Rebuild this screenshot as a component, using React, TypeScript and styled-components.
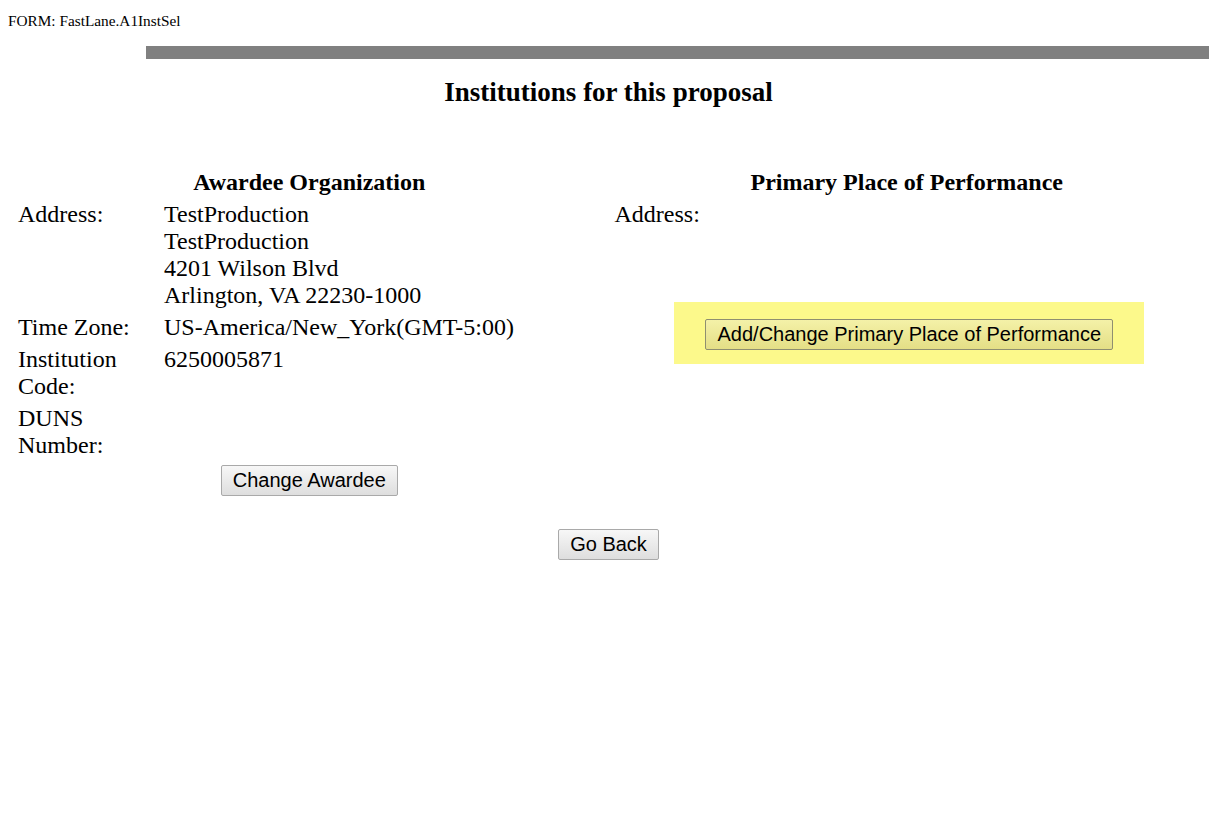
import React from "react";
import styled, { createGlobalStyle } from "styled-components";

const Global = createGlobalStyle`
  html, body { margin: 0; padding: 0; background: #fff; }
  body { margin: 8px; font-family: "Liberation Serif", "Times New Roman", serif; color: #000; }
`;

const FormName = styled.div`
  font-size: 15.3px;
  line-height: 17px;
  padding-top: 4px;
`;

const Bar = styled.div`
  margin: 17px -8px 0 138px;
  height: 13px;
  background: #808080;
`;

const Title = styled.h1`
  margin: 18px 0 0;
  text-align: center;
  font-size: 27px;
  line-height: 31px;
  font-weight: bold;
`;

const Columns = styled.div`
  display: grid;
  grid-template-columns: 1fr 1fr;
  margin: 61px 2px 0;
`;

const Column = styled.div<{ $shift?: number }>`
  display: flex;
  flex-direction: column;
  padding: 0 8px 0 ${(p) => 8 + (p.$shift ?? 0)}px;
`;

const Heading = styled.div`
  text-align: center;
  font-size: 24px;
  font-weight: bold;
  line-height: 27px;
  margin-bottom: 5px;
`;

const Fields = styled.div`
  display: grid;
  grid-template-columns: 140px 1fr;
  column-gap: 6px;
  row-gap: 5px;
  font-size: 24px;
  line-height: 27px;
`;

const Label = styled.div``;
const Value = styled.div`
  white-space: nowrap;
`;

const Button = styled.button<{ $tint?: boolean }>`
  font-family: "Liberation Sans", Arial, sans-serif;
  font-size: 20px;
  height: 31px;
  padding: 0 11px;
  border: 1px solid ${(p) => (p.$tint ? "#8f8f70" : "#a9a9a9")};
  border-radius: 2px;
  color: #000;
  background: ${(p) =>
    p.$tint
      ? "linear-gradient(#f4f1a8, #e4df86)"
      : "linear-gradient(#f7f7f7, #dedede)"};
  cursor: pointer;
`;

const ButtonRow = styled.div<{ $top: number }>`
  display: flex;
  justify-content: center;
  margin-top: ${(p) => p.$top}px;
`;

const Highlight = styled.div`
  align-self: center;
  margin: 74px 0 0 5px;
  width: 470px;
  height: 62px;
  box-sizing: border-box;
  background: #fcf98b;
  display: flex;
  justify-content: center;
  padding-top: 17px;
`;

export default function App() {
  return (
    <>
      <Global />
      <FormName>FORM: FastLane.A1InstSel</FormName>
      <Bar />
      <Title>Institutions for this proposal</Title>
      <Columns>
        <Column>
          <Heading>Awardee Organization</Heading>
          <Fields>
            <Label>Address:</Label>
            <Value>
              TestProduction
              <br />
              TestProduction
              <br />
              4201 Wilson Blvd
              <br />
              Arlington, VA 22230-1000
            </Value>
            <Label>Time Zone:</Label>
            <Value>US-America/New_York(GMT-5:00)</Value>
            <Label>Institution Code:</Label>
            <Value>6250005871</Value>
            <Label>DUNS Number:</Label>
            <Value></Value>
          </Fields>
          <ButtonRow $top={6}>
            <Button>Change Awardee</Button>
          </ButtonRow>
        </Column>
        <Column $shift={-2}>
          <Heading>Primary Place of Performance</Heading>
          <Fields>
            <Label>Address:</Label>
            <Value></Value>
          </Fields>
          <Highlight>
            <Button $tint>Add/Change Primary Place of Performance</Button>
          </Highlight>
        </Column>
      </Columns>
      <ButtonRow $top={33}>
        <Button>Go Back</Button>
      </ButtonRow>
    </>
  );
}
